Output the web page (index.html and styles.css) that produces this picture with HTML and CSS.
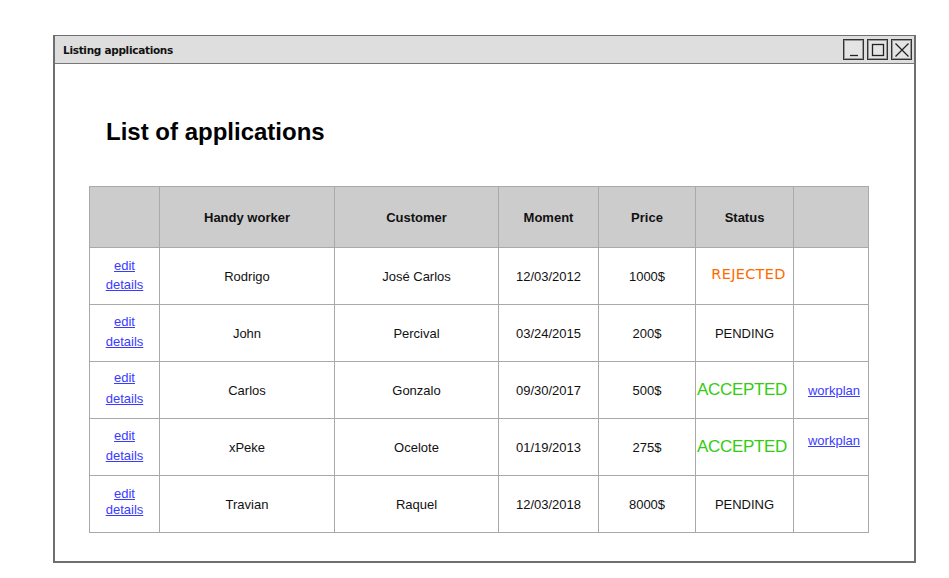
FILE: index.html
```html
<!DOCTYPE html>
<html>
<head>
<meta charset="utf-8">
<title>Listing applications</title>
<link rel="stylesheet" href="styles.css">
</head>
<body>
<div class="window">
  <div class="titlebar">
    <span class="title">Listing applications</span>
    <div class="controls">
      <span class="ctl"><svg width="18" height="18" viewBox="0 0 18 18"><path d="M5 14.5h8" stroke="#222" stroke-width="1.3" fill="none"/></svg></span>
      <span class="ctl"><svg width="18" height="18" viewBox="0 0 18 18"><rect x="3.5" y="3.5" width="11" height="11" stroke="#222" stroke-width="1.3" fill="none"/></svg></span>
      <span class="ctl"><svg width="18" height="18" viewBox="0 0 18 18"><path d="M2.5 2.5L15.5 15.5M15.5 2.5L2.5 15.5" stroke="#222" stroke-width="1.3" fill="none"/></svg></span>
    </div>
  </div>
  <div class="content">
    <h1 class="heading">List of applications</h1>
    <table class="grid">
      <colgroup>
        <col class="c1"><col class="c2"><col class="c3"><col class="c4"><col class="c5"><col class="c6"><col class="c7">
      </colgroup>
      <thead>
        <tr>
          <th></th><th>Handy worker</th><th>Customer</th><th>Moment</th><th>Price</th><th>Status</th><th></th>
        </tr>
      </thead>
      <tbody>
        <tr>
          <td><div class="links lh19"><a href="#">edit</a><br><a href="#">details</a></div></td>
          <td>Rodrigo</td><td>José Carlos</td><td>12/03/2012</td><td>1000$</td>
          <td><span class="rejected">REJECTED</span></td><td></td>
        </tr>
        <tr>
          <td><div class="links lh20"><a href="#">edit</a><br><a href="#">details</a></div></td>
          <td>John</td><td>Percival</td><td>03/24/2015</td><td>200$</td>
          <td><span class="pending">PENDING</span></td><td></td>
        </tr>
        <tr>
          <td><div class="links lh21"><a href="#">edit</a><br><a href="#">details</a></div></td>
          <td>Carlos</td><td>Gonzalo</td><td>09/30/2017</td><td>500$</td>
          <td><span class="accepted">ACCEPTED</span></td><td><div class="wp"><a href="#">workplan</a></div></td>
        </tr>
        <tr>
          <td><div class="links lh20"><a href="#">edit</a><br><a href="#">details</a></div></td>
          <td>xPeke</td><td>Ocelote</td><td>01/19/2013</td><td>275$</td>
          <td><span class="accepted">ACCEPTED</span></td><td><div class="wp wp-top"><a href="#">workplan</a></div></td>
        </tr>
        <tr>
          <td><div class="links lh16"><a href="#">edit</a><br><a href="#">details</a></div></td>
          <td>Travian</td><td>Raquel</td><td>12/03/2018</td><td>8000$</td>
          <td><span class="pending">PENDING</span></td><td></td>
        </tr>
      </tbody>
    </table>
  </div>
</div>
</body>
</html>
```
FILE: styles.css
```css
html, body {
  margin: 0;
  padding: 0;
  background: #ffffff;
}
body {
  padding: 35px 0 0 53px;
  font-family: "Liberation Sans", Arial, sans-serif;
  color: #000;
}
.window {
  box-sizing: border-box;
  width: 863px;
  height: 528px;
  border: 2px solid #6f6f6f;
  border-top-width: 1px;
  display: flex;
  flex-direction: column;
  background: #fff;
}
.titlebar {
  box-sizing: border-box;
  height: 28px;
  background: #dedede;
  border-bottom: 1px solid #777;
  display: flex;
  align-items: center;
  justify-content: space-between;
  padding: 0 2px 0 8px;
}
.title {
  font-family: "DejaVu Sans", sans-serif;
  font-weight: bold;
  font-size: 10.5px;
  letter-spacing: -0.3px;
  color: #111;
}
.controls {
  display: flex;
  gap: 3px;
}
.ctl {
  box-sizing: border-box;
  width: 21px;
  height: 21px;
  border: 1px solid #333;
  outline: 1px solid #999;
  outline-offset: -2px;
  display: flex;
  align-items: center;
  justify-content: center;
  background: #e4e4e4;
}
.ctl svg { display: block; }
.content {
  padding: 54px 0 0 34px;
}
.heading {
  margin: 0 0 41px 17px;
  font-size: 24px;
  font-weight: bold;
  line-height: 27px;
}
.grid {
  border-collapse: collapse;
  table-layout: fixed;
  width: 780px;
  font-size: 13px;
}
.c1 { width: 70px; }
.c2 { width: 175px; }
.c3 { width: 164px; }
.c4 { width: 100px; }
.c5 { width: 97px; }
.c6 { width: 98px; }
.c7 { width: 75px; }
.grid th, .grid td {
  border: 1px solid #a9a9a9;
  text-align: center;
  vertical-align: middle;
  padding: 0;
}
.grid th {
  background: #cccccc;
  height: 60px;
  font-weight: bold;
  font-size: 13px;
  color: #111;
}
.grid td {
  height: 56px;
  color: #111;
}
.grid a {
  color: #3b3bff;
  text-decoration: underline;
}
.lh19 { line-height: 19px; padding-bottom: 2px; }
.lh20 { line-height: 20px; padding-bottom: 3px; }
.lh21 { line-height: 21px; padding-bottom: 4px; }
.lh16 { line-height: 16px; padding-bottom: 5px; }
.rejected {
  display: inline-block;
  color: #ff6a00;
  font-family: "DejaVu Sans", sans-serif;
  font-size: 14.5px;
  letter-spacing: 0.3px;
  padding: 0 0 5px 8px;
}
.accepted {
  color: #33cc11;
  font-size: 17px;
  display: inline-block;
  padding-right: 5px;
  letter-spacing: -0.3px;
}
.pending {
  font-size: 13px;
}
.wp { padding-left: 6px; }
.wp-top { padding-bottom: 13px; }
```
